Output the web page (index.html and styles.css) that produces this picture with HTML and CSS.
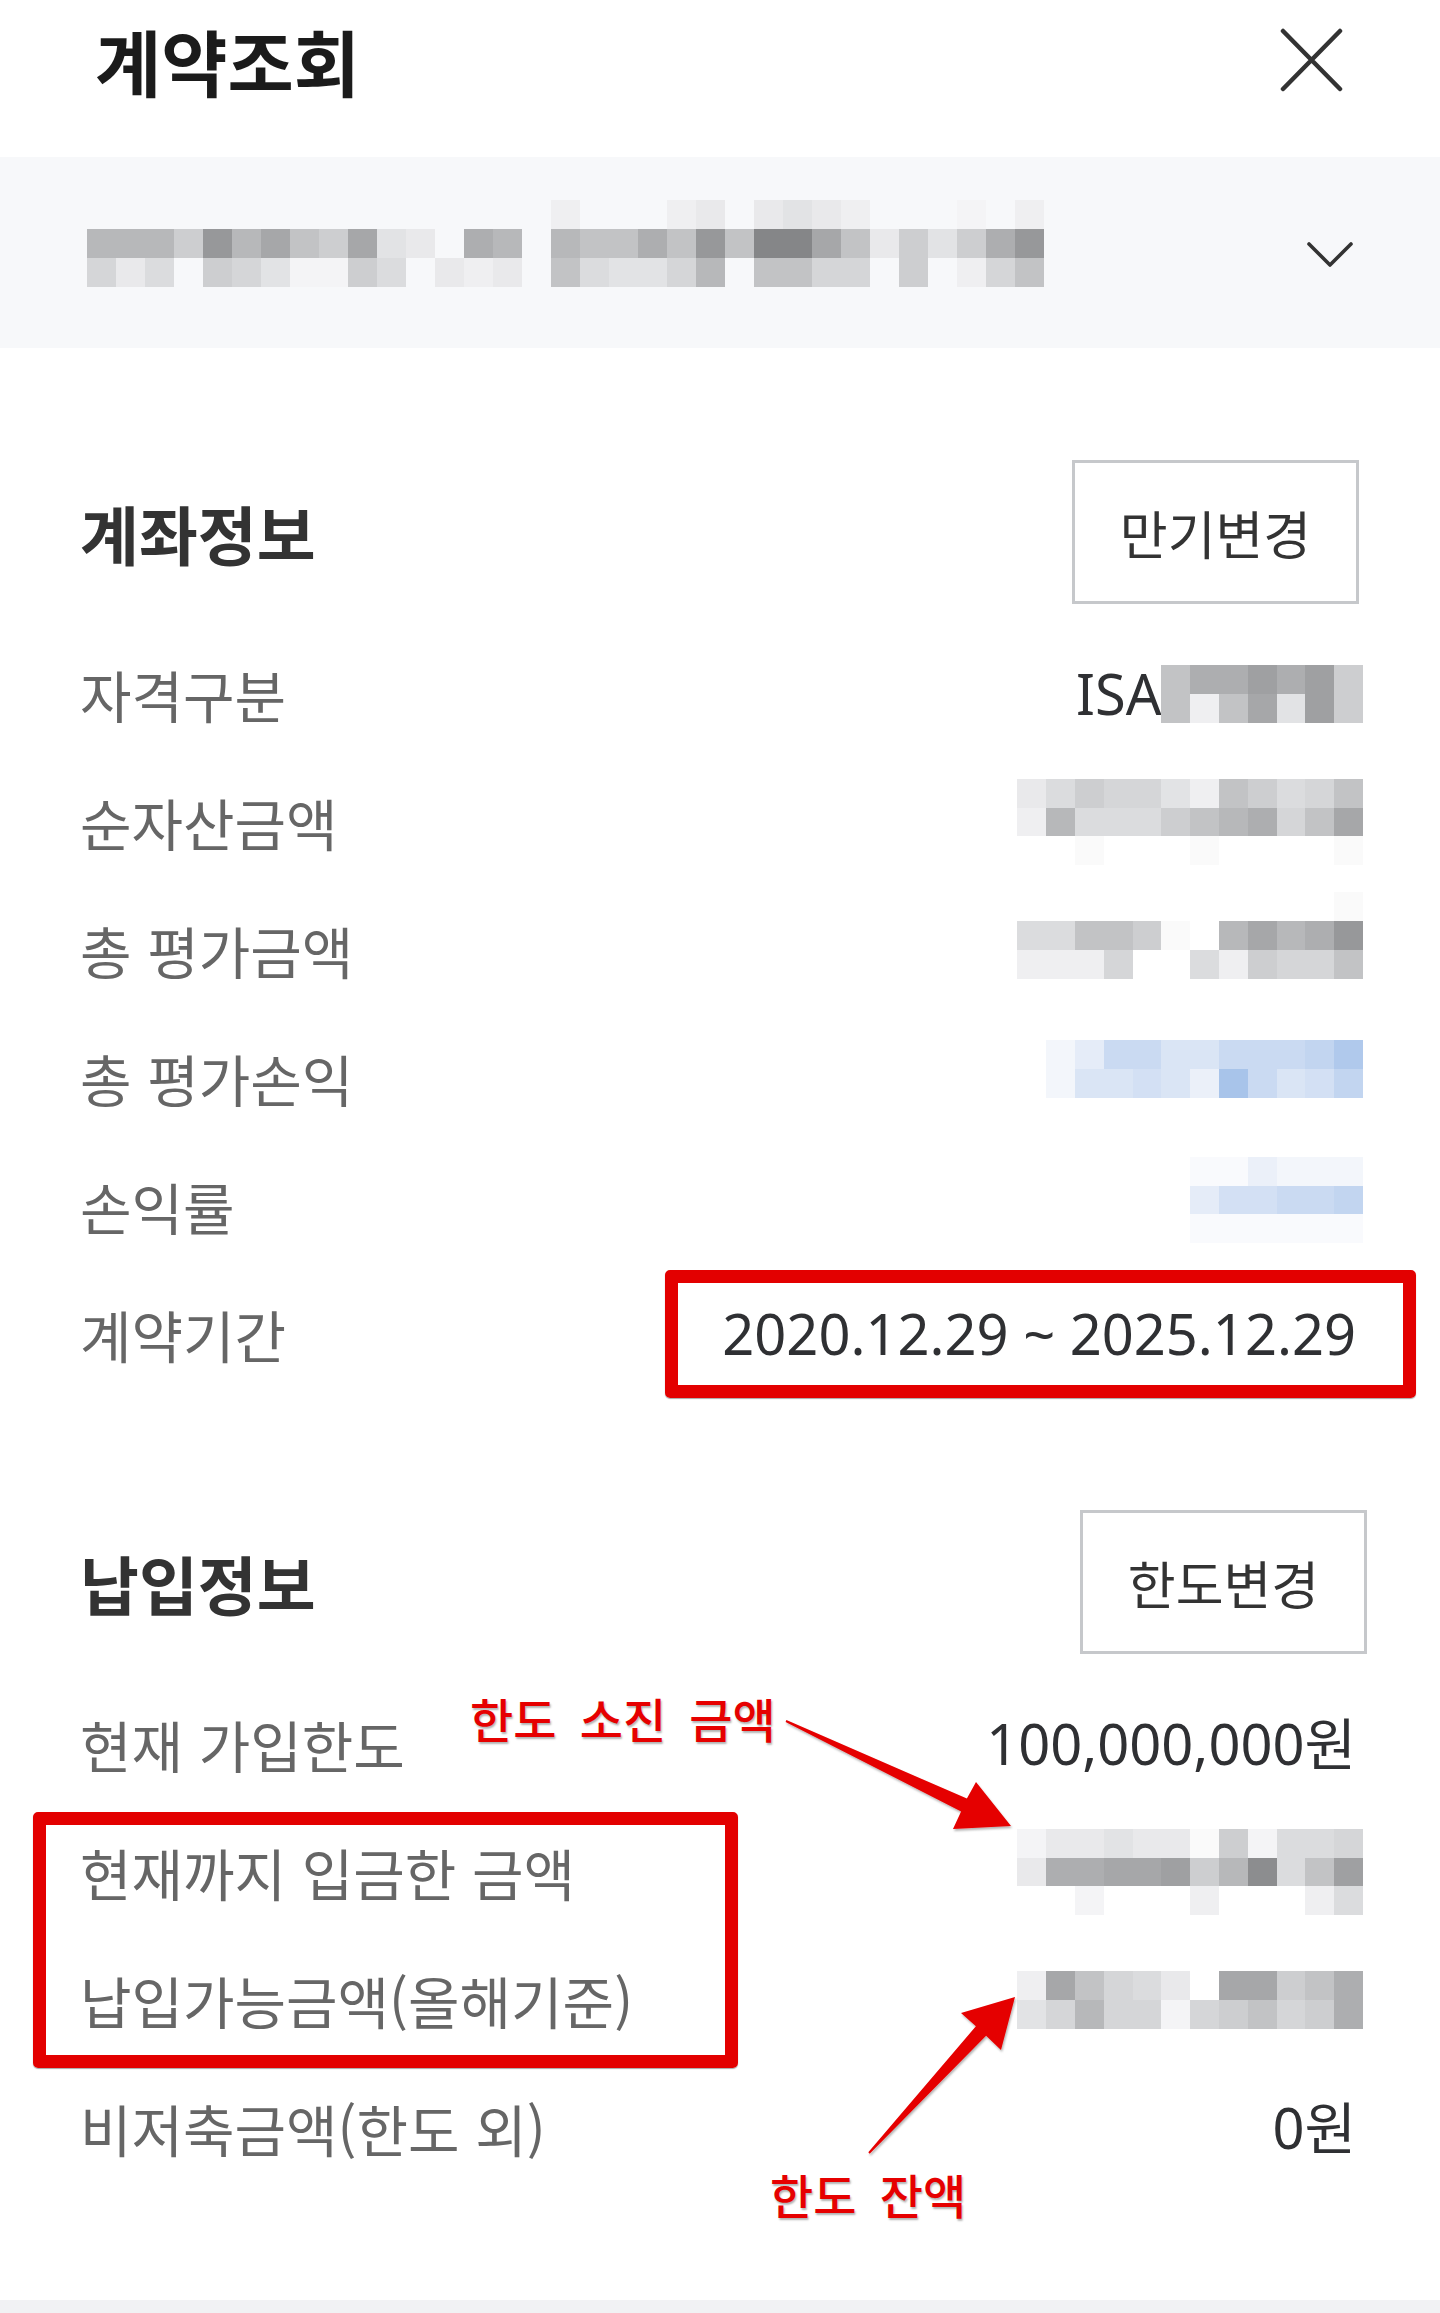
FILE: index.html
```html
<!DOCTYPE html>
<html lang="ko">
<head>
  <meta charset="UTF-8">
  <meta name="viewport" content="width=device-width, initial-scale=1.0">
  <title>계약조회</title>
  <link rel="stylesheet" href="styles.css">
</head>
<body>
  <div class="sheet">
    <header class="topbar">
      <h1 class="title">계약조회</h1>
      <button class="close" aria-label="닫기">
        <svg width="64" height="64" viewBox="0 0 64 64"><path d="M4 3 L61 61 M61 3 L4 61" /></svg>
      </button>
    </header>

    <!-- account selector (number is pixelated) -->
    <div class="account">
      <div class="mz">
        <div class="mr"><i></i><i></i><i></i><i></i><i></i><i></i><i></i><i></i><i></i><i></i><i></i><i></i><i></i><i></i><i></i><i></i><i class="k94"></i><i></i><i></i><i></i><i class="k94"></i><i class="k92"></i><i></i><i class="k92"></i><i class="k88"></i><i class="k92"></i><i class="k94"></i><i></i><i></i><i></i><i class="k95"></i><i></i><i class="k94"></i></div>
        <div class="mr"><i class="k72"></i><i class="k72"></i><i class="k72"></i><i class="k80"></i><i class="k58"></i><i class="k72"></i><i class="k64"></i><i class="k76"></i><i class="k80"></i><i class="k64"></i><i class="k88"></i><i class="k92"></i><i></i><i class="k68"></i><i class="k72"></i><i></i><i class="k72"></i><i class="k76"></i><i class="k76"></i><i class="k68"></i><i class="k76"></i><i class="k58"></i><i class="k76"></i><i class="k52"></i><i class="k52"></i><i class="k64"></i><i class="k76"></i><i class="k92"></i><i class="k80"></i><i class="k88"></i><i class="k80"></i><i class="k68"></i><i class="k58"></i></div>
        <div class="mr"><i class="k84"></i><i class="k92"></i><i class="k86"></i><i></i><i class="k80"></i><i class="k84"></i><i class="k88"></i><i class="k95"></i><i class="k95"></i><i class="k80"></i><i class="k86"></i><i></i><i class="k92"></i><i class="k94"></i><i class="k92"></i><i></i><i class="k76"></i><i class="k86"></i><i class="k88"></i><i class="k88"></i><i class="k84"></i><i class="k72"></i><i></i><i class="k76"></i><i class="k76"></i><i class="k84"></i><i class="k84"></i><i></i><i class="k80"></i><i></i><i class="k94"></i><i class="k84"></i><i class="k76"></i></div>
      </div>
      <svg class="chevron" width="48" height="28" viewBox="0 0 48 28"><path d="M4 4 L25 25 L46 4" /></svg>
    </div>

    <section class="section">
      <div class="sec-head">
        <h2 class="sec-title">계좌정보</h2>
        <button class="btn">만기변경</button>
      </div>

      <div class="row">
        <span class="label">자격구분</span>
        <span class="value">ISA<span class="mz">
          <span class="mr"><i class="k76"></i><i class="k68"></i><i class="k68"></i><i class="k60"></i><i class="k68"></i><i class="k60"></i><i class="k80"></i></span>
          <span class="mr"><i class="k76"></i><i class="k94"></i><i class="k76"></i><i class="k64"></i><i class="k88"></i><i class="k60"></i><i class="k80"></i></span>
        </span></span>
      </div>
      <div class="row">
        <span class="label">순자산금액</span>
        <span class="mz">
          <span class="mr"><i class="k92"></i><i class="k86"></i><i class="k80"></i><i class="k84"></i><i class="k84"></i><i class="k88"></i><i class="k94"></i><i class="k76"></i><i class="k80"></i><i class="k86"></i><i class="k84"></i><i class="k76"></i></span>
          <span class="mr"><i class="k94"></i><i class="k72"></i><i class="k86"></i><i class="k86"></i><i class="k86"></i><i class="k80"></i><i class="k76"></i><i class="k72"></i><i class="k68"></i><i class="k84"></i><i class="k76"></i><i class="k64"></i></span>
          <span class="mr"><i></i><i></i><i class="k98"></i><i></i><i></i><i></i><i class="k98"></i><i></i><i></i><i></i><i></i><i class="k98"></i></span>
        </span>
      </div>
      <div class="row">
        <span class="label">총 평가금액</span>
        <span class="mz">
          <span class="mr"><i></i><i></i><i></i><i></i><i></i><i></i><i></i><i></i><i></i><i></i><i></i><i class="k98"></i></span>
          <span class="mr"><i class="k86"></i><i class="k86"></i><i class="k76"></i><i class="k76"></i><i class="k80"></i><i class="k98"></i><i></i><i class="k72"></i><i class="k64"></i><i class="k72"></i><i class="k68"></i><i class="k58"></i></span>
          <span class="mr"><i class="k94"></i><i class="k94"></i><i class="k94"></i><i class="k84"></i><i></i><i></i><i class="k86"></i><i class="k94"></i><i class="k80"></i><i class="k84"></i><i class="k84"></i><i class="k76"></i></span>
          <span class="mr"><i></i></span>
        </span>
      </div>
      <div class="row">
        <span class="label">총 평가손익</span>
        <span class="mz lift">
          <span class="mr"><i class="u1"></i><i class="u2"></i><i class="u5"></i><i class="u5"></i><i class="u3"></i><i class="u3"></i><i class="u5"></i><i class="u5"></i><i class="u5"></i><i class="u6"></i><i class="u7"></i></span>
          <span class="mr"><i class="u1"></i><i class="u3"></i><i class="u3"></i><i class="u4"></i><i class="u3"></i><i class="u15"></i><i class="u8"></i><i class="u5"></i><i class="u3"></i><i class="u4"></i><i class="u6"></i></span>
        </span>
      </div>
      <div class="row">
        <span class="label">손익률</span>
        <span class="mz lift-s">
          <span class="mr"><i class="u0"></i><i class="u0"></i><i class="u15"></i><i class="u1"></i><i class="u1"></i><i class="u1"></i></span>
          <span class="mr"><i class="u2"></i><i class="u4"></i><i class="u4"></i><i class="u5"></i><i class="u5"></i><i class="u6"></i></span>
          <span class="mr"><i class="u0"></i><i class="u0"></i><i class="u0"></i><i class="u0"></i><i class="u0"></i><i class="u0"></i></span>
        </span>
      </div>
      <div class="row">
        <span class="label">계약기간</span>
        <span class="value">2020.12.29 ~ 2025.12.29</span>
      </div>
    </section>

    <section class="section">
      <div class="sec-head">
        <h2 class="sec-title">납입정보</h2>
        <button class="btn btn-alt">한도변경</button>
      </div>

      <div class="row">
        <span class="label">현재 가입한도</span>
        <span class="value">100,000,000원</span>
      </div>
      <div class="row">
        <span class="label">현재까지 입금한 금액</span>
        <span class="mz">
          <span class="mr"><i class="k95"></i><i class="k92"></i><i class="k92"></i><i class="k88"></i><i class="k92"></i><i class="k92"></i><i class="k98"></i><i class="k80"></i><i class="k95"></i><i class="k86"></i><i class="k86"></i><i class="k84"></i></span>
          <span class="mr"><i class="k92"></i><i class="k68"></i><i class="k68"></i><i class="k64"></i><i class="k64"></i><i class="k60"></i><i class="k80"></i><i class="k72"></i><i class="k55"></i><i class="k86"></i><i class="k76"></i><i class="k60"></i></span>
          <span class="mr"><i></i><i></i><i class="k95"></i><i></i><i></i><i></i><i class="k94"></i><i></i><i></i><i></i><i class="k94"></i><i class="k86"></i></span>
        </span>
      </div>
      <div class="row">
        <span class="label">납입가능금액(올해기준)</span>
        <span class="mz">
          <span class="mr"><i class="k94"></i><i class="k64"></i><i class="k76"></i><i class="k84"></i><i class="k86"></i><i class="k92"></i><i></i><i class="k64"></i><i class="k64"></i><i class="k80"></i><i class="k76"></i><i class="k68"></i></span>
          <span class="mr"><i class="k88"></i><i class="k84"></i><i class="k72"></i><i class="k84"></i><i class="k84"></i><i class="k95"></i><i class="k84"></i><i class="k80"></i><i class="k76"></i><i class="k84"></i><i class="k80"></i><i class="k68"></i></span>
        </span>
      </div>
      <div class="row">
        <span class="label">비저축금액(한도 외)</span>
        <span class="value">0원</span>
      </div>
    </section>

    <!-- markup added on top of the capture -->
    <div class="mark mark-period"></div>
    <div class="mark mark-deposit"></div>
    <span class="note note-used">한도 소진 금액</span>
    <span class="note note-left">한도 잔액</span>
    <svg class="arrows" width="1440" height="2313" viewBox="0 0 1440 2313">
      <defs>
        <filter id="shade" x="-10%" y="-10%" width="120%" height="120%">
          <feDropShadow dx="1" dy="2" stdDeviation="1.2" flood-color="#000" flood-opacity="0.3" />
        </filter>
      </defs>
      <polygon points="786.4,1720.1 966.9,1798.6 976,1782 1011,1826 953,1829 961.1,1811.4 785.6,1721.9" />
      <polygon points="868.3,2152.3 975.9,2026.2 961,2013 1015,1997 1001,2050 986.1,2035.8 869.7,2153.7" />
    </svg>
  </div>
  <div class="foot"></div>
</body>
</html>
```

FILE: styles.css
```css
body {
  margin: 0;
  background: #fff;
  font-family: "Noto Sans CJK KR", "Noto Sans", sans-serif;
  color: #333;
}

.sheet {
  position: relative;
  padding-bottom: 108px;
}

/* top bar */
.topbar {
  height: 157px;
  box-sizing: border-box;
  padding: 0 97px 37px 95px;
  display: flex;
  align-items: center;
}

.title {
  margin: 0;
  font-size: 72px;
  font-weight: 700;
  line-height: 1.2;
  color: #1b1b1b;
}

.close {
  margin-left: auto;
  padding: 0;
  border: none;
  background: none;
  display: flex;
}

.close path,
.chevron path {
  fill: none;
  stroke: #333;
  stroke-linecap: round;
  stroke-linejoin: round;
}

.close path {
  stroke-width: 4.5;
}

/* account picker */
.account {
  height: 191px;
  box-sizing: border-box;
  background: #f7f8fa;
  padding: 43px 87px 0 87px;
  display: flex;
  align-items: flex-start;
}

.chevron {
  margin-left: auto;
  align-self: center;
  margin-top: -40px;
}

.chevron path {
  stroke-width: 3.6;
}

/* pixelated blocks */
.mz {
  display: flex;
  flex-direction: column;
}

.mr {
  display: flex;
}

.mr i {
  width: 29px;
  height: 29px;
  flex: none;
}

.row .mr i {
  width: 28.8px;
  height: 28.8px;
}

.lift {
  margin-bottom: 18px;
}

.lift-s {
  margin-bottom: 12px;
}

.k98 { background: #fafafa; }
.k95 { background: #f4f4f6; }
.k94 { background: #efeff1; }
.k92 { background: #e9e9eb; }
.k88 { background: #e2e3e5; }
.k86 { background: #dbdcde; }
.k84 { background: #d5d6d8; }
.k80 { background: #cdced0; }
.k76 { background: #c2c3c5; }
.k72 { background: #b7b8ba; }
.k68 { background: #adaeb0; }
.k64 { background: #a6a7a9; }
.k60 { background: #9fa0a2; }
.k58 { background: #97989a; }
.k55 { background: #8c8d8f; }
.k52 { background: #858688; }

.u0 { background: #f9fafd; }
.u1 { background: #f3f6fb; }
.u15 { background: #ebf0f9; }
.u2 { background: #e5ecf8; }
.u3 { background: #dae5f5; }
.u4 { background: #d3e0f4; }
.u5 { background: #cadaf2; }
.u6 { background: #c2d5f0; }
.u7 { background: #b0c9ec; }
.u8 { background: #a8c4ea; }

/* sections */
.section {
  padding: 112px 80px 0 80px;
}

.sec-head {
  height: 144px;
  margin-bottom: 26px;
  display: flex;
  align-items: center;
  justify-content: space-between;
}

.sec-title {
  margin: 0;
  font-size: 64px;
  font-weight: 700;
  line-height: 1.2;
  color: #333;
}

.btn {
  width: 287px;
  height: 144px;
  box-sizing: border-box;
  border: 3px solid #c6c8cb;
  background: #fff;
  font-family: "Noto Sans CJK KR", sans-serif;
  font-size: 52px;
  color: #333;
  padding: 0;
  margin-right: 1px;
}

.btn-alt {
  margin-right: -7px;
}

.row {
  height: 128px;
  display: flex;
  align-items: center;
  justify-content: space-between;
}

.label {
  font-size: 56px;
  line-height: 1.2;
  color: #666;
}

.value {
  display: flex;
  align-items: center;
  font-family: "Noto Sans", "Noto Sans CJK KR", sans-serif;
  font-size: 56px;
  line-height: 1.2;
  color: #2f3033;
  margin-right: 4px;
}

.value .mz {
  margin-right: -7px;
}

.row > .mz {
  margin-right: -3px;
}

.foot {
  height: 13px;
  background: #f1f2f4;
}

/* red annotations */
.mark {
  position: absolute;
  box-sizing: border-box;
  border: 13px solid #e30000;
  border-radius: 5px;
  box-shadow: 0 1px 1px rgba(0, 0, 0, 0.35);
}

.mark-period {
  left: 665px;
  top: 1270px;
  width: 751px;
  height: 128px;
}

.mark-deposit {
  left: 33px;
  top: 1812px;
  width: 705px;
  height: 256px;
}

.note {
  position: absolute;
  font-family: "Noto Sans CJK KR", sans-serif;
  font-size: 47px;
  font-weight: 500;
  line-height: 1;
  color: #e60000;
  -webkit-text-stroke: 6px #fff;
  paint-order: stroke fill;
  text-shadow: 1px 2px 2px rgba(0, 0, 0, 0.3);
  white-space: nowrap;
  word-spacing: 10px;
}

.note-used {
  left: 470px;
  top: 1694px;
}

.note-left {
  left: 770px;
  top: 2170px;
}

.arrows {
  position: absolute;
  left: 0;
  top: 0;
  pointer-events: none;
}

.arrows polygon {
  fill: #e50000;
  filter: url(#shade);
}
```
